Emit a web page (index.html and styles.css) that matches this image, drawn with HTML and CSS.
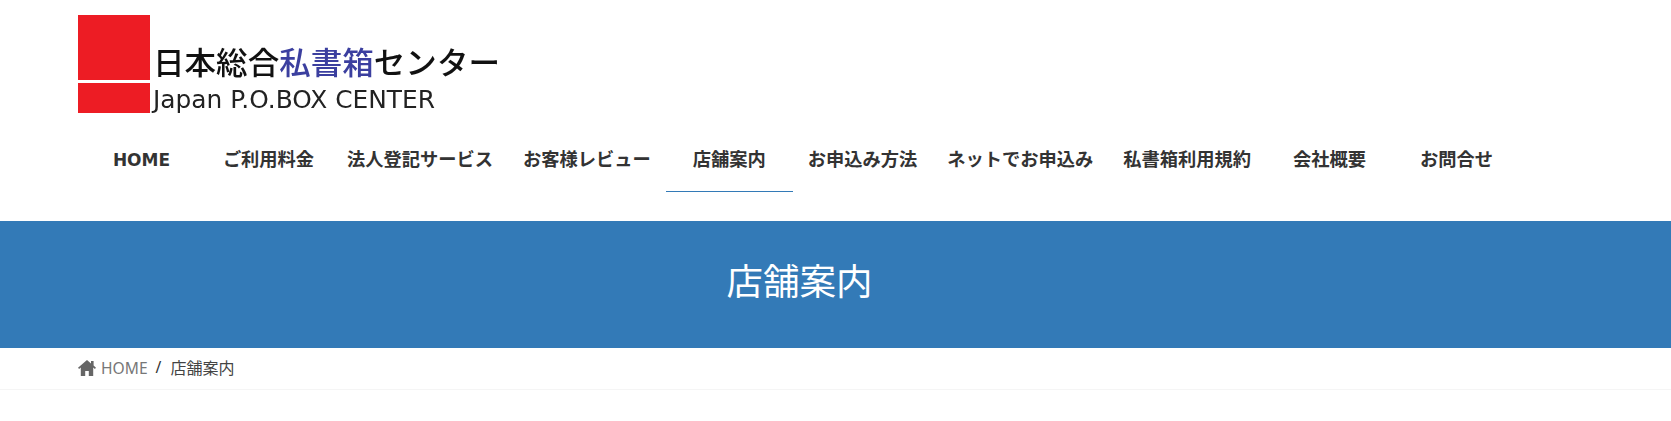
FILE: index.html
```html
<!DOCTYPE html>
<html lang="ja">
<head>
<meta charset="utf-8">
<title>店舗案内</title>
<link rel="stylesheet" href="styles.css">
</head>
<body>
<header class="site-header">
  <a class="logo" href="#">
    <svg class="logo-svg" width="430" height="105" viewBox="0 0 430 105">
      <rect class="logo-red" x="0" y="0" width="72" height="65"/>
      <rect class="logo-red" x="0" y="68" width="72" height="30"/>
      <text class="logo-jp" x="75" y="59" textLength="347" lengthAdjust="spacingAndGlyphs">日本総合<tspan class="logo-blue">私書箱</tspan>センター</text>
      <text class="logo-en" x="75" y="93" textLength="282" lengthAdjust="spacingAndGlyphs">Japan P.O.BOX CENTER</text>
    </svg>
  </a>
  <nav class="global-nav">
    <a class="nav-item nav-item-latin" href="#">HOME</a>
    <a class="nav-item" href="#">ご利用料金</a>
    <a class="nav-item" href="#">法人登記サービス</a>
    <a class="nav-item" href="#">お客様レビュー</a>
    <a class="nav-item is-active" href="#">店舗案内</a>
    <a class="nav-item" href="#">お申込み方法</a>
    <a class="nav-item" href="#">ネットでお申込み</a>
    <a class="nav-item" href="#">私書箱利用規約</a>
    <a class="nav-item" href="#">会社概要</a>
    <a class="nav-item" href="#">お問合せ</a>
  </nav>
</header>
<section class="page-banner">
  <h1 class="page-title">店舗案内</h1>
</section>
<div class="breadcrumb">
  <svg class="home-icon" width="18" height="16" viewBox="0 0 18 16">
    <path d="M9 0 L13 3.4 V1 H15.6 V5.6 L18 7.7 L16.9 9 L15.2 7.6 V16 H10.8 V11 H7.2 V16 H2.8 V7.6 L1.1 9 L0 7.7 Z"/>
  </svg>
  <a class="crumb-link" href="#">HOME</a>
  <span class="crumb-sep">/</span>
  <span class="crumb-current">店舗案内</span>
</div>
</body>
</html>
```
FILE: styles.css
```css
* {
  box-sizing: border-box;
}

html,
body {
  margin: 0;
  padding: 0;
  background: #fff;
}

body {
  font-family: "Noto Sans", "Noto Sans CJK JP", sans-serif;
  color: #333;
  height: 421px;
  overflow: hidden;
}

a {
  text-decoration: none;
  color: inherit;
}

.site-header {
  padding: 15px 0 28px 78px;
}

.logo {
  display: block;
  height: 105px;
}

.logo-svg {
  display: block;
  filter: blur(0.35px);
}

.logo-red {
  fill: #ed1c24;
}

.logo-jp {
  font-family: "Noto Sans CJK JP", sans-serif;
  font-size: 31px;
  font-weight: 500;
  fill: #111;
}

.logo-blue {
  fill: #3b3f9f;
}

.logo-en {
  font-family: "DejaVu Sans", sans-serif;
  font-size: 24px;
  fill: #222;
}

.global-nav {
  display: flex;
  height: 73px;
  padding-top: 12px;
}

.nav-item {
  display: flex;
  align-items: center;
  justify-content: center;
  min-width: 127px;
  padding: 0 15px 6px;
  height: 60px;
  font-family: "Noto Sans CJK JP", sans-serif;
  font-size: 18.25px;
  font-weight: 700;
  line-height: 1;
  color: #333;
  white-space: nowrap;
  border-bottom: 1px solid transparent;
}

.nav-item-latin {
  padding-bottom: 2px;
  font-family: "DejaVu Sans", sans-serif;
  font-size: 17px;
}

.nav-item.is-active {
  border-bottom-color: #337ab7;
}

.page-banner {
  display: flex;
  align-items: center;
  height: 127px;
  background: #337ab7;
  padding: 0 0 8px 78px;
  width: 100%;
}

.page-title {
  width: 1443px;
  margin: 0;
  text-align: center;
  font-family: "Noto Sans CJK JP", sans-serif;
  font-size: 36.5px;
  font-weight: 400;
  line-height: 1;
  color: #fff;
}

.breadcrumb {
  display: flex;
  align-items: center;
  height: 42px;
  padding: 0 0 3px 78px;
  border-bottom: 1px solid #f5f5f5;
  font-size: 15.6px;
  line-height: 1;
}

.home-icon {
  display: block;
  fill: #666;
  margin: 2px 5px 0 0;
}

.crumb-link {
  padding-top: 4px;
  color: #777;
}

.crumb-sep {
  margin: 0 9px 0 8px;
  padding-top: 2px;
  color: #333;
}

.crumb-current {
  font-family: "Noto Sans CJK JP", sans-serif;
  font-size: 16px;
  color: #444;
}
```
